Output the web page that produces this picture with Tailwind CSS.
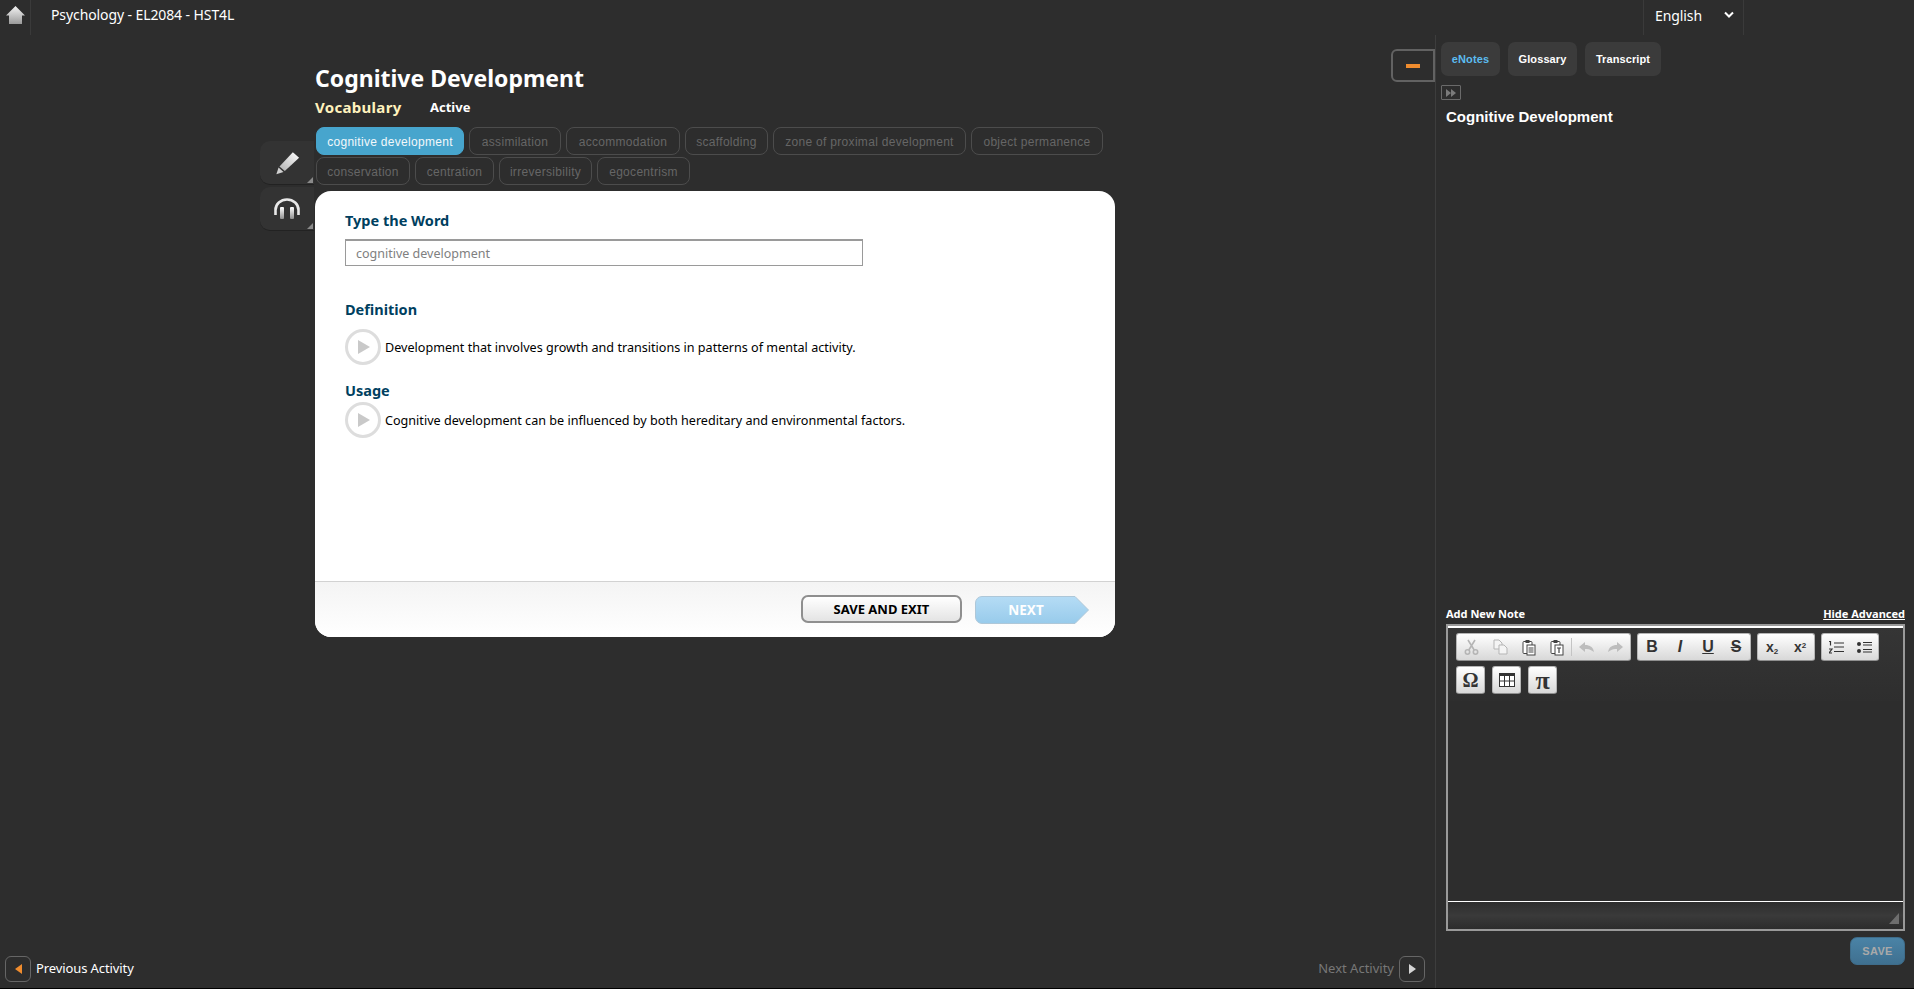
<!DOCTYPE html>
<html lang="en">
<head>
    <meta charset="UTF-8">
    <title>Cognitive Development</title>
    <script src="https://cdn.jsdelivr.net/npm/@tailwindcss/browser@4"></script>
</head>
<body class="bg-[#2d2d2d] text-white font-['Noto_Sans',sans-serif] overflow-hidden">
<div class="h-[989px] flex flex-col border-b border-black">
    <!-- Header -->
    <header class="h-[35px] flex items-stretch shrink-0">
        <div class="w-[31px] border-r border-[#3a3a3a] pl-[6px] pt-[6px]">
            <svg width="19" height="18" viewBox="0 0 19 18">
                <defs><linearGradient id="homeFill" x1="0" y1="0" x2="0" y2="1"><stop offset="0" stop-color="#f4f4f4"/><stop offset="1" stop-color="#9a9a9a"/></linearGradient></defs>
                <path d="M9.5 0 L19 9.5 H16 V18 H3 V9.5 H0 Z" fill="url(#homeFill)"/>
            </svg>
        </div>
        <div class="pl-5 text-[14px] leading-[30px] tracking-[-0.1px]">Psychology - EL2084 - HST4L</div>
        <div class="absolute left-[1643px] top-0 w-[101px] h-[35px] border-x border-[#3a3a3a] flex items-center pl-[11px] pb-[5px] text-[14px] tracking-[-0.1px]">
            English
            <svg class="absolute left-[80px] top-[11px]" width="10" height="8" viewBox="0 0 10 8"><path d="M1 1.5 L5 5.5 L9 1.5" fill="none" stroke="#fff" stroke-width="2"/></svg>
        </div>
    </header>

    <div class="flex-1 flex min-h-0">
        <!-- Activity column -->
        <main class="w-[1435px] shrink-0 flex flex-col">
            <div class="flex flex-1 pl-[260px]">
                <div class="w-[55px] pt-[106px] flex flex-col gap-[2px] shrink-0">
                    <button class="relative h-[44px] w-[54px] bg-[#333333] rounded-l-[10px] border-b border-[#222] flex items-center justify-center">
                        <svg width="25" height="24" viewBox="0 0 28 26">
                            <defs><linearGradient id="penFill" x1="1" y1="0" x2="0" y2="1"><stop offset="0" stop-color="#ffffff"/><stop offset="1" stop-color="#b0b0b0"/></linearGradient></defs>
                            <path d="M20 1 L27 7 L11 22 L5 17 Z" fill="url(#penFill)"/>
                            <path d="M4 18 L9.5 23 L1.5 25.5 Z" fill="#d0d0d0"/>
                        </svg>
                        <span class="absolute right-[1px] bottom-[1px] w-0 h-0 border-l-[6px] border-l-transparent border-b-[6px] border-b-[#8a8a8a]"></span>
                    </button>
                    <button class="relative h-[44px] w-[54px] bg-[#333333] rounded-l-[10px] border-b border-[#222] flex items-center justify-center">
                        <svg width="26" height="21" viewBox="0 0 26 21">
                            <defs><linearGradient id="cupFill" x1="0" y1="0" x2="0" y2="1"><stop offset="0" stop-color="#ffffff"/><stop offset="1" stop-color="#8f8f8f"/></linearGradient></defs>
                            <path d="M1.5 17 V12 A11.5 10.5 0 0 1 24.5 12 V17" fill="none" stroke="#e8e8e8" stroke-width="2.6"/>
                            <rect x="6" y="9" width="4" height="12" rx="1" fill="url(#cupFill)"/>
                            <rect x="16" y="9" width="4" height="12" rx="1" fill="url(#cupFill)"/>
                        </svg>
                        <span class="absolute right-[1px] bottom-[1px] w-0 h-0 border-l-[6px] border-l-transparent border-b-[6px] border-b-[#8a8a8a]"></span>
                    </button>
                </div>

                <div class="w-[800px] shrink-0">
                    <h1 class="text-[23px] leading-[32px] font-bold mt-[27px]">Cognitive Development</h1>
                    <div class="flex items-center h-[24px] mt-[1px]">
                        <span class="w-[115px] text-[15px] tracking-[0.3px] font-bold text-[#fff2bd]">Vocabulary</span>
                        <span class="text-[13px] font-bold pt-[2px]">Active</span>
                    </div>
                    <div class="flex flex-wrap gap-x-[5px] gap-y-[2px] mt-[8px] w-[800px] font-['Liberation_Sans',sans-serif] text-[12px] tracking-[0.3px] text-center text-[#666666]">
                        <span class="w-[148px] h-[28px] leading-[28px] ml-[1px] rounded-[8px] border border-[#47a5cd] bg-[#47a5cd] text-[#f2f8fb]">cognitive development</span>
                        <span class="w-[92px] h-[28px] leading-[28px] rounded-[8px] border border-[#4c4c4c]">assimilation</span>
                        <span class="w-[114px] h-[28px] leading-[28px] rounded-[8px] border border-[#4c4c4c]">accommodation</span>
                        <span class="w-[83px] h-[28px] leading-[28px] rounded-[8px] border border-[#4c4c4c]">scaffolding</span>
                        <span class="w-[193px] h-[28px] leading-[28px] rounded-[8px] border border-[#4c4c4c]">zone of proximal development</span>
                        <span class="w-[132px] h-[28px] leading-[28px] rounded-[8px] border border-[#4c4c4c]">object permanence</span>
                        <span class="w-[94px] h-[28px] leading-[28px] ml-[1px] rounded-[8px] border border-[#4c4c4c]">conservation</span>
                        <span class="w-[79px] h-[28px] leading-[28px] rounded-[8px] border border-[#4c4c4c]">centration</span>
                        <span class="w-[93px] h-[28px] leading-[28px] rounded-[8px] border border-[#4c4c4c]">irreversibility</span>
                        <span class="w-[93px] h-[28px] leading-[28px] rounded-[8px] border border-[#4c4c4c]">egocentrism</span>
                    </div>

                    <!-- Card -->
                    <section class="mt-[6px] h-[446px] bg-white rounded-[16px] flex flex-col overflow-hidden text-black">
                        <div class="flex-1 px-[30px] pt-[19px]">
                            <h2 class="text-[14.5px] leading-[20px] font-bold text-[#003f5f]">Type the Word</h2>
                            <input class="block mt-[9px] w-[518px] h-[27px] border border-t-2 border-[#9a9a9a] px-[10px] text-[12.5px] placeholder:text-[#808080]" placeholder="cognitive development">
                            <h2 class="mt-[33px] text-[14.5px] leading-[20px] font-bold text-[#003f5f]">Definition</h2>
                            <div class="mt-[10px] flex items-center gap-[4px] text-[12.6px]">
                                <span class="w-[36px] h-[36px] rounded-full border-[3px] border-[#dddddd] flex items-center justify-center pl-[2px]">
                                    <svg width="14" height="16" viewBox="0 0 14 16"><path d="M1 1 L13 8 L1 15 Z" fill="#c9c9c9"/></svg>
                                </span>
                                <span class="pt-[2px]">Development that involves growth and transitions in patterns of mental activity.</span>
                            </div>
                            <h2 class="mt-[15px] text-[14.5px] leading-[20px] font-bold text-[#003f5f]">Usage</h2>
                            <div class="mt-[2px] flex items-center gap-[4px] text-[12.6px]">
                                <span class="w-[36px] h-[36px] rounded-full border-[3px] border-[#dddddd] flex items-center justify-center pl-[2px]">
                                    <svg width="14" height="16" viewBox="0 0 14 16"><path d="M1 1 L13 8 L1 15 Z" fill="#c9c9c9"/></svg>
                                </span>
                                <span class="pt-[2px]">Cognitive development can be influenced by both hereditary and environmental factors.</span>
                            </div>
                        </div>
                        <div class="h-[56px] shrink-0 border-t border-[#d2d2d2] bg-linear-to-b from-[#f4f4f4] to-white flex items-start justify-end gap-[13px] pt-[13px] pr-[26px]">
                            <button class="w-[161px] h-[28px] pt-[2px] rounded-[7px] border-2 border-[#8f8f8f] bg-linear-to-b from-white to-[#e4e4e4] text-[13px] font-bold text-black">SAVE AND EXIT</button>
                            <button class="relative w-[114px] h-[28px] mt-[1px] text-[13.5px] font-bold text-white">
                                <svg class="absolute inset-0" width="114" height="28" viewBox="0 0 114 28">
                                    <defs><linearGradient id="nextFill" x1="0" y1="0" x2="0" y2="1"><stop offset="0" stop-color="#b5dcf5"/><stop offset="1" stop-color="#98cbeb"/></linearGradient></defs>
                                    <path d="M7 .5 H100 L113.5 14 L100 27.5 H7 A6.5 6.5 0 0 1 .5 21 V7 A6.5 6.5 0 0 1 7 .5 Z" fill="url(#nextFill)" stroke="#aec7d8"/>
                                </svg>
                                <span class="relative pr-[12px]">NEXT</span>
                            </button>
                        </div>
                    </section>
                </div>

                <button class="ml-[276px] mt-[14px] w-[44px] h-[33px] rounded-l-[6px] border-2 border-[#626262] flex items-center justify-center shrink-0">
                    <span class="block w-[14px] h-[4px] bg-[#f08c2e]"></span>
                </button>
            </div>

            <!-- Activity paging -->
            <footer class="h-[32px] flex items-start justify-between pl-[5px] pr-[10px] shrink-0 text-[13px] tracking-[-0.1px]">
                <div class="flex items-center gap-[5px]">
                    <span class="w-[26px] h-[26px] rounded-[6px] border border-[#666] flex items-center justify-center">
                        <svg width="7" height="10" viewBox="0 0 7 10"><path d="M7 0 V10 L0 5 Z" fill="#f08c2e"/></svg>
                    </span>
                    Previous Activity
                </div>
                <div class="flex items-center gap-[5px] text-[#777777]">
                    <span class="tracking-[0px]">Next Activity</span>
                    <span class="w-[26px] h-[26px] rounded-[6px] border border-[#666] flex items-center justify-center">
                        <svg width="7" height="10" viewBox="0 0 7 10"><path d="M0 0 V10 L7 5 Z" fill="#d5d5d5"/></svg>
                    </span>
                </div>
            </footer>
        </main>

        <!-- Notes panel -->
        <aside class="flex-1 border-l border-[#3d3d3d] pl-[5px] pr-[9px] flex flex-col min-w-0">
            <nav class="flex gap-[8px] pt-[7px] font-['Liberation_Sans',sans-serif] text-[11px] tracking-[0.1px] font-bold">
                <span class="w-[59px] h-[34px] leading-[34px] text-center rounded-[7px] bg-[#3b3b3b] text-[#5bbdf0]">eNotes</span>
                <span class="w-[69px] h-[34px] leading-[34px] text-center rounded-[7px] bg-[#3b3b3b]">Glossary</span>
                <span class="w-[76px] h-[34px] leading-[34px] text-center rounded-[7px] bg-[#3b3b3b]">Transcript</span>
            </nav>
            <button class="mt-[9px] w-[20px] h-[15px] border border-[#6a6a6a] rounded-[1px] flex items-center justify-center">
                <svg width="12" height="8" viewBox="0 0 12 8"><path d="M1 0 L6 4 L1 8 Z M6 0 L11 4 L6 8 Z" fill="#7a7a7a"/></svg>
            </button>
            <h3 class="mt-[7px] pl-[5px] font-['Liberation_Sans',sans-serif] text-[15px] leading-[20px] font-bold">Cognitive Development</h3>

            <div class="mt-auto flex justify-between items-center pl-[5px] h-[18px] pb-[2px] text-[11px] font-bold">
                <span>Add New Note</span>
                <a class="underline">Hide Advanced</a>
            </div>
            <div class="ml-[5px] w-[459px] h-[307px] border-2 border-[#999999] flex flex-col">
                <div class="h-[75px] border-t-2 border-white bg-linear-to-b from-[#353535] to-[#2e2e2e] pt-[5px] pl-[8px] flex flex-col gap-[5px] text-[#333]">
                    <div class="flex gap-[6px]">
                        <div class="flex h-[28px] items-center rounded-[3px] bg-linear-to-b from-white to-[#d8d8d8] border border-[#b5b5b5] border-b-[#8f8f8f]">
                            <svg class="mx-[7px]" width="15" height="16" viewBox="0 0 15 16"><g fill="none" stroke="#b5b5b5" stroke-width="1.6"><circle cx="3.5" cy="13" r="2.2"/><circle cx="11.5" cy="13" r="2.2"/><path d="M4.8 11 L11 1 M10.2 11 L4 1"/></g></svg>
                            <svg class="mx-[7px]" width="15" height="16" viewBox="0 0 15 16"><g fill="#f4f4f4" stroke="#b5b5b5"><path d="M1 1 H6 L9 4 V10 H1 Z"/><path d="M6 6 H11 L14 9 V15 H6 Z"/></g></svg>
                            <svg class="mx-[7px]" width="14" height="17" viewBox="0 0 14 17"><rect x="1" y="2.5" width="9" height="12" rx="1" fill="#fff" stroke="#444"/><rect x="3.5" y="1" width="4" height="3" fill="#444"/><rect x="5" y="6" width="8" height="10" fill="#fff" stroke="#444"/><path d="M6.5 9 H11.5 M6.5 11 H11.5 M6.5 13 H11.5" stroke="#444"/></svg>
                            <svg class="mx-[7px]" width="14" height="17" viewBox="0 0 14 17"><rect x="1" y="2.5" width="9" height="12" rx="1" fill="#fff" stroke="#444"/><rect x="3.5" y="1" width="4" height="3" fill="#444"/><rect x="5" y="6" width="8" height="10" fill="#fff" stroke="#444"/><path d="M7 9 H11 M9 9 V14" stroke="#444" stroke-width="1.2"/></svg>
                            <span class="w-px h-[18px] bg-[#c4c4c4]"></span>
                            <svg class="mx-[7px]" width="15" height="10" viewBox="0 0 15 10"><path d="M6 0 L0 5 L6 10 V7 C10 6.5 12.5 8 15 10 C14 5 11 3 6 3 Z" fill="#bdbdbd"/></svg>
                            <svg class="mx-[7px]" width="15" height="10" viewBox="0 0 15 10"><path d="M9 0 L15 5 L9 10 V7 C5 6.5 2.5 8 0 10 C1 5 4 3 9 3 Z" fill="#bdbdbd"/></svg>
                        </div>
                        <div class="flex h-[28px] items-center rounded-[3px] bg-linear-to-b from-white to-[#d8d8d8] border border-[#b5b5b5] border-b-[#8f8f8f] font-['Liberation_Sans',sans-serif] text-[16px] text-center">
                            <span class="w-[28px] font-bold">B</span>
                            <span class="w-[28px] font-bold italic">I</span>
                            <span class="w-[28px] font-bold underline">U</span>
                            <span class="w-[28px] font-bold line-through">S</span>
                        </div>
                        <div class="flex h-[28px] items-center rounded-[3px] bg-linear-to-b from-white to-[#d8d8d8] border border-[#b5b5b5] border-b-[#8f8f8f] font-['Liberation_Sans',sans-serif] text-[14px] font-bold text-center">
                            <span class="w-[28px]">x<sub class="text-[8px]">2</sub></span>
                            <span class="w-[28px]">x<sup class="text-[8px]">2</sup></span>
                        </div>
                        <div class="flex h-[28px] items-center rounded-[3px] bg-linear-to-b from-white to-[#d8d8d8] border border-[#b5b5b5] border-b-[#8f8f8f]">
                            <svg class="mx-[6.5px]" width="15" height="13" viewBox="0 0 15 13"><path d="M5 2 H15 M5 6 H15 M5 10.5 H15 M0 .5 L1.5 0 V4.5 M0 8 H3 L0 12 H3" fill="none" stroke="#333" stroke-width="1.2"/></svg>
                            <svg class="mx-[6.5px]" width="15" height="13" viewBox="0 0 15 13"><circle cx="2" cy="3" r="2" fill="#333"/><circle cx="2" cy="10" r="2" fill="#333"/><path d="M6 1.5 H15 M6 4 H15 M6 8.5 H15 M6 11 H15" stroke="#333" stroke-width="1.2"/></svg>
                        </div>
                    </div>
                    <div class="flex gap-[7px]">
                        <div class="w-[29px] h-[28px] rounded-[3px] bg-linear-to-b from-white to-[#d8d8d8] border border-[#b5b5b5] border-b-[#8f8f8f] flex items-center justify-center font-['Liberation_Serif',serif] font-bold text-[20px]">Ω</div>
                        <div class="w-[29px] h-[28px] rounded-[3px] bg-linear-to-b from-white to-[#d8d8d8] border border-[#b5b5b5] border-b-[#8f8f8f] flex items-center justify-center">
                            <svg width="16" height="14" viewBox="0 0 16 14"><rect x=".5" y=".5" width="15" height="13" fill="#fff" stroke="#333"/><rect x="0" y="0" width="16" height="3" fill="#333"/><path d="M0 8 H16 M5.5 3 V14 M10.5 3 V14" stroke="#333"/></svg>
                        </div>
                        <div class="w-[29px] h-[28px] rounded-[3px] bg-linear-to-b from-white to-[#d8d8d8] border border-[#b5b5b5] border-b-[#8f8f8f] flex items-center justify-center font-['Liberation_Serif',serif] font-bold text-[26px]">π</div>
                    </div>
                </div>
                <div class="flex-1"></div>
                <div class="relative h-[28px] border-t border-white bg-linear-to-b from-[#2d2d2d] via-[#3a3a3a] to-[#2c2c2c]">
                    <span class="absolute right-[4px] bottom-[5px] w-0 h-0 border-l-[10px] border-l-transparent border-b-[11px] border-b-[#6e6e6e]"></span>
                </div>
            </div>
            <div class="flex justify-end pt-[6px] pb-[23px]">
                <button class="w-[55px] h-[28px] rounded-[7px] border border-[#3e6c8a] bg-linear-to-b from-[#4a83a6] to-[#3f7090] text-[11px] font-bold text-[#a9a9a9] tracking-[0.3px] font-['Liberation_Sans',sans-serif]">SAVE</button>
            </div>
        </aside>
    </div>
</div>
</body>
</html>
